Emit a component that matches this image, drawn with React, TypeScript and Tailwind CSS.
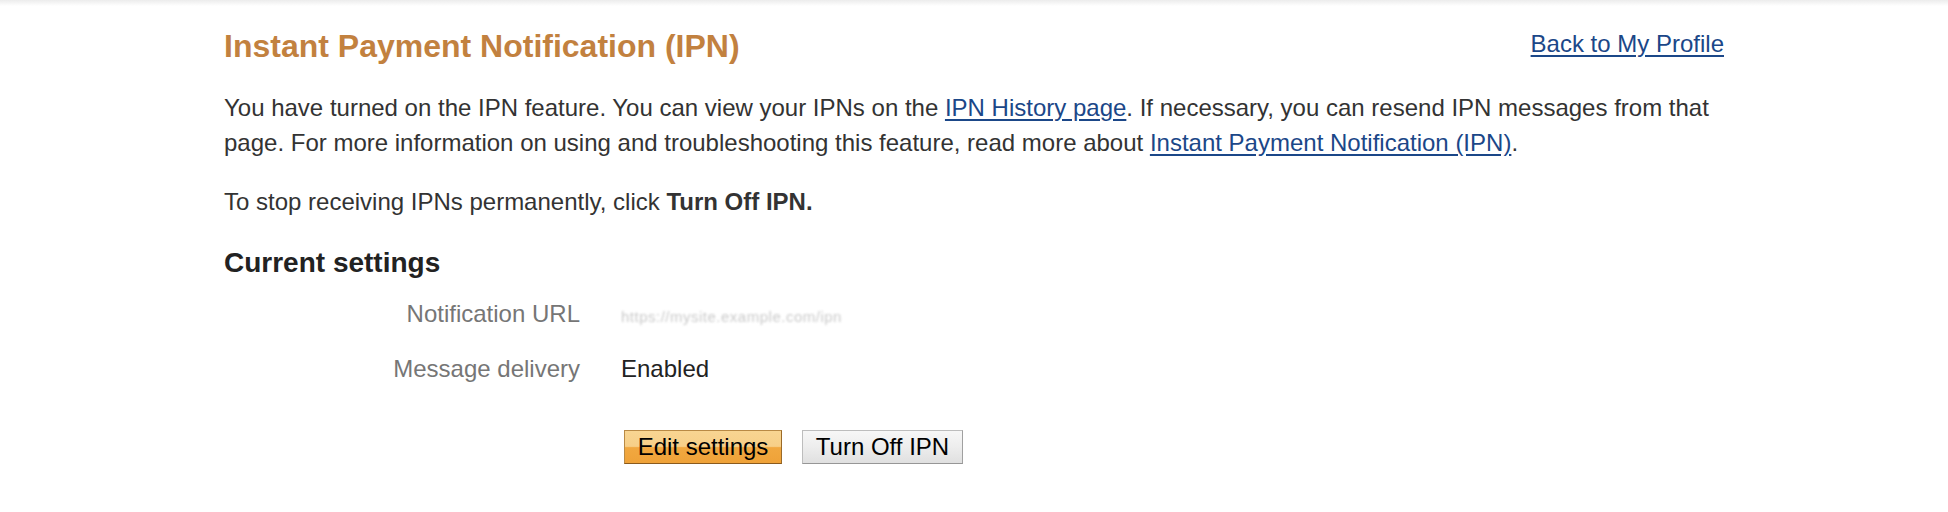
const font = "font-['Liberation_Sans',Arial,Helvetica,sans-serif]";

const SettingRow: React.FC<{ label: string; children: React.ReactNode }> = ({ label, children }) => (
  <div className="grid grid-cols-[356px_1fr] gap-x-[41px] items-baseline">
    <div className="text-right text-[#767676]">{label}</div>
    <div className="text-[#222]">{children}</div>
  </div>
);

export default function App() {
  return (
    <div className={`${font} min-h-[512px] bg-white text-[24px] leading-[35px] text-[#333]`}>
      <div className="h-[6px] bg-gradient-to-b from-[#ececec] to-white" />
      <main className="w-[1500px] mx-auto pt-[22px]">
        <div className="flex justify-between items-start">
          <h1 className="text-[32px] leading-[36px] font-bold text-[#c2813f]">
            Instant Payment Notification (IPN)
          </h1>
          <a href="#" className="mt-[2px] leading-[28px] text-[#1b4788] underline underline-offset-[3px]">
            Back to My Profile
          </a>
        </div>

        <p className="mt-[26px]">
          You have turned on the IPN feature. You can view your IPNs on the{" "}
          <a href="#" className="text-[#1b4788] underline underline-offset-[3px]">IPN History page</a>. If
          necessary, you can resend IPN messages from that page. For more information on using and
          troubleshooting this feature, read more about{" "}
          <a href="#" className="text-[#1b4788] underline underline-offset-[3px]">
            Instant Payment Notification (IPN)
          </a>
          .
        </p>

        <p className="mt-[24px]">
          To stop receiving IPNs permanently, click <span className="font-bold">Turn Off IPN.</span>
        </p>

        <h2 className="mt-[27px] text-[28px] leading-[34px] font-bold text-[#222]">Current settings</h2>

        <div className="mt-[16px] flex flex-col gap-[17px]">
          <SettingRow label="Notification URL">
            <span className="inline-block text-[15px] tracking-[0.5px] text-[#bcbcbc] blur-[1.2px] opacity-80">
              https://mysite.example.com/ipn
            </span>
          </SettingRow>
          <SettingRow label="Message delivery">Enabled</SettingRow>
        </div>

        <div className="mt-[44px] ml-[400px] flex gap-[20px] text-black">
          <button className="h-[34px] w-[158px] border border-[#b98a45] border-b-[#8a5a1c] border-r-[#9a6a28] bg-[linear-gradient(to_bottom,#f8d592_0%,#f7cf88_48%,#f1a840_52%,#efa238_100%)] text-[24px] leading-[30px]">
            Edit settings
          </button>
          <button className="h-[34px] w-[161px] border border-[#bdbdbd] border-b-[#969696] border-r-[#a0a0a0] bg-[linear-gradient(to_bottom,#f7f7f7_0%,#ededed_50%,#e0e0e0_100%)] text-[24px] leading-[30px]">
            Turn Off IPN
          </button>
        </div>
      </main>
    </div>
  );
}
